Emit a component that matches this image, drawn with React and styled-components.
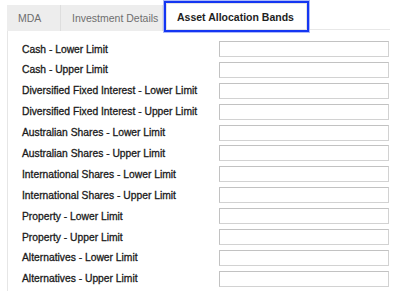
import React from 'react';
import styled, { createGlobalStyle } from 'styled-components';

const GlobalStyle = createGlobalStyle`
  body {
    margin: 0;
    background: #ffffff;
    font-family: "Liberation Sans", Arial, sans-serif;
  }
`;

const fields = [
  'Cash - Lower Limit',
  'Cash - Upper Limit',
  'Diversified Fixed Interest - Lower Limit',
  'Diversified Fixed Interest - Upper Limit',
  'Australian Shares - Lower Limit',
  'Australian Shares - Upper Limit',
  'International Shares - Lower Limit',
  'International Shares - Upper Limit',
  'Property - Lower Limit',
  'Property - Upper Limit',
  'Alternatives - Lower Limit',
  'Alternatives - Upper Limit',
];

const tabs = [
  { label: 'MDA', width: 54 },
  { label: 'Investment Details', width: 102 },
  { label: 'Asset Allocation Bands', width: 145, active: true },
];

function App() {
  return (
    <>
      <GlobalStyle />
      <Wrap>
        <TabBar>
          {tabs.map((t) => (
            <Tab key={t.label} $active={t.active} $width={t.width}>
              {t.label}
            </Tab>
          ))}
          <TabFill />
        </TabBar>
        <Panel>
          {fields.map((f) => (
            <Row key={f}>
              <Label>{f}</Label>
              <Input type='text' />
            </Row>
          ))}
        </Panel>
      </Wrap>
    </>
  );
}

const Wrap = styled.main`
  width: 390px;
  padding: 1px 0 0 7px;
  box-sizing: border-box;
`;

const TabBar = styled.div`
  display: flex;
  align-items: flex-end;
  height: 30px;
`;

const Tab = styled.div`
  width: ${(p) => p.$width}px;
  box-sizing: border-box;
  display: flex;
  align-items: center;
  padding-left: 11px;
  font-size: 10.5px;
  white-space: nowrap;
  font-weight: ${(p) => (p.$active ? 700 : 400)};
  color: ${(p) => (p.$active ? '#1e1e1e' : '#6f6f6f')};
  height: ${(p) => (p.$active ? '31px' : '26px')};
  background: ${(p) => (p.$active ? '#ffffff' : '#ededed')};
  border-right: ${(p) => (p.$active ? 'none' : '1px solid #dedede')};
  ${(p) =>
    p.$active &&
    `
    border: 2px solid #1436f2;
    padding-left: 11px;
    box-shadow: inset 0 0 0 1px #e4e4e4, 0 0 0 1px rgba(20, 54, 242, 0.35);
    margin-left: 1px;
    margin-bottom: -1px;
  `}
`;

const TabFill = styled.div`
  flex: 1;
  border-bottom: 1px solid #e8e8e8;
  margin-bottom: 1px;
  margin-left: 1px;
`;

const Panel = styled.section`
  border-left: 1px solid #e6e6e6;
  padding: 10px 0 4px 14px;
  display: flex;
  flex-direction: column;
  gap: 4.9px;
`;

const Row = styled.div`
  display: flex;
  align-items: center;
  height: 16px;
`;

const Label = styled.label`
  width: 197px;
  font-size: 10.3px;
  font-weight: 400;
  color: #1a1a1a;
  -webkit-text-stroke: 0.3px #1a1a1a;
  white-space: nowrap;
`;

const Input = styled.input`
  width: 170px;
  height: 16px;
  box-sizing: border-box;
  border: 1px solid #d2d2d2;
  border-top-color: #c2c2c2;
  border-left-color: #c2c2c2;
  background: #fff;
  padding: 0;
  margin: 0;
  outline: none;
`;

export default App;
